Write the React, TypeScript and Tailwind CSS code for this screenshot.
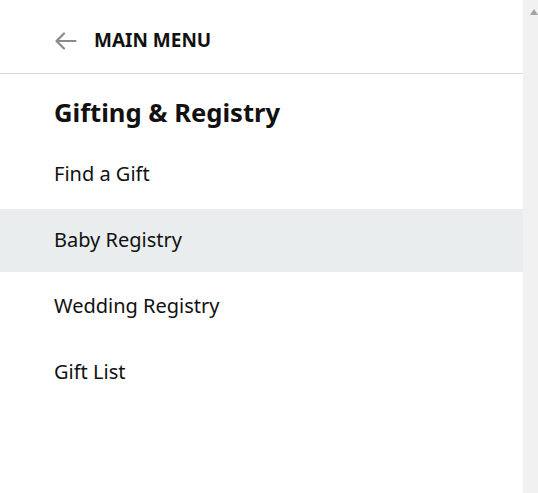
import React from 'react';

const items = ['Find a Gift', 'Baby Registry', 'Wedding Registry', 'Gift List'];

export default function App() {
  return (
    <div className="flex h-[493px] w-[538px] overflow-hidden bg-white" style={{ fontFamily: '"Noto Sans", "Open Sans", sans-serif' }}>
      <div className="flex w-[523px] flex-col">
        <div className="flex h-[74px] items-center border-b border-[#d5dbdb] pl-[54px] pt-[8px]">
          <svg width="23" height="18" viewBox="0 0 23 18" fill="none" stroke="#8a8a8a" strokeWidth="2.2" strokeLinecap="round" strokeLinejoin="round">
            <path d="M21.5 9H2.5M10 1.5L2.5 9L10 16.5" />
          </svg>
          <span className="ml-[17px] text-[19px] font-bold text-[#111]">MAIN MENU</span>
        </div>
        <div className="flex h-[69px] items-center pl-[54px] pt-[9px] text-[25.6px] font-bold text-[#111]">Gifting &amp; Registry</div>
        <div className="flex flex-col gap-[3px]">
          {items.map((item, i) => (
            <div
              key={item}
              className={`flex h-[63px] items-center pl-[54px] pb-[1px] text-[20px] text-[#111] ${i === 1 ? 'bg-[#eaeded]' : ''}`}
            >
              {item}
            </div>
          ))}
        </div>
      </div>
      <div className="relative w-[15px] bg-[#f1f1f1]">
        <div className="absolute left-[7px] top-[9px] h-0 w-0 border-x-[4px] border-b-[6px] border-x-transparent border-b-[#a3a3a3]" />
      </div>
    </div>
  );
}
